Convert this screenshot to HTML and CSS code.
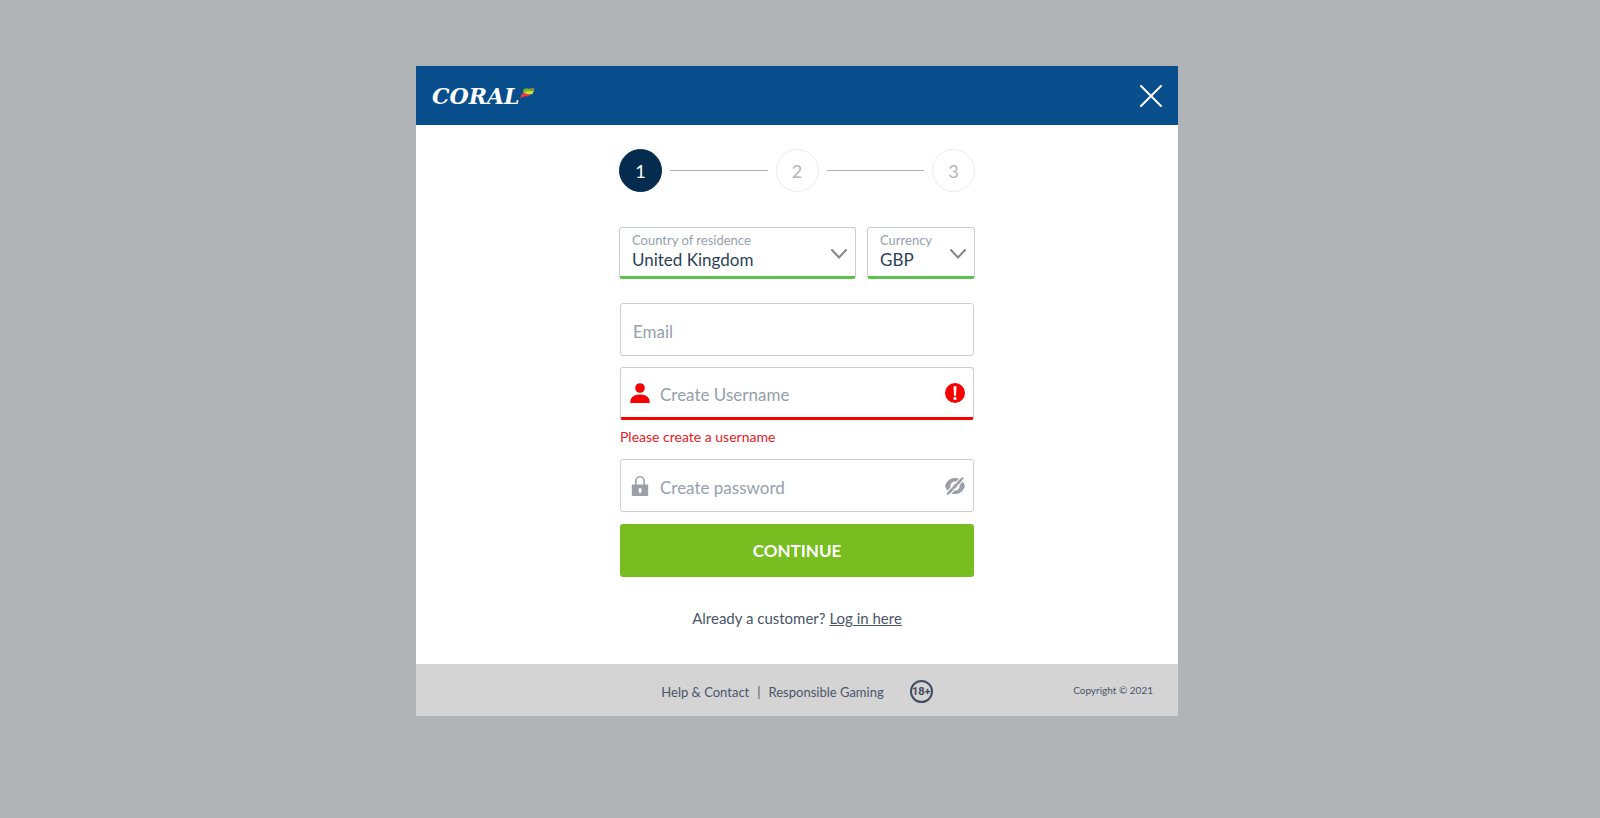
FILE: index.html
```html
<!DOCTYPE html>
<html lang="en">
<head>
<meta charset="utf-8">
<meta name="viewport" content="width=device-width, initial-scale=1">
<title>Coral - Registration</title>
<link rel="stylesheet" href="styles.css">
</head>
<body>
<main class="dialog">
  <header class="dialog-header">
    <a class="logo" href="#" aria-label="Coral">
      <span class="logo-text">CORAL</span>
      <svg class="logo-mark" viewBox="0 0 15 11" aria-hidden="true">
        <path fill="#f0393f" d="M0 10.600 1.500 6.500 3.500 4.800 8 5 9.500 6.500 8.500 8.500 5.500 8.300 3 9Z"/>
        <path fill="#6cb52d" d="M2.500 3.500 4 1 7 .3 11 1 10 3.500 5 4Z"/>
        <path fill="#d9dc2b" d="M3 4.200 8 3 14.500 2.300 13 4.300 13 5.800 10 6.600 6 5.400Z"/>
        <path fill="#8c9a3c" d="M10 .6 14.500 0 13.500 2 10 2.200Z"/>
      </svg>
    </a>
    <button class="close" type="button" aria-label="Close">
      <svg viewBox="0 0 22 22"><path d="M1 1 21 21M21 1 1 21"/></svg>
    </button>
  </header>

  <form class="form">
    <ol class="steps">
      <li class="step step-active">1</li>
      <li class="step">2</li>
      <li class="step">3</li>
    </ol>

    <div class="selects">
      <div class="select-field">
        <label for="country">Country of residence</label>
        <select id="country"><option>United Kingdom</option></select>
        <svg class="chevron" viewBox="0 0 16 10" aria-hidden="true"><path d="M1 1 8 8.500 15 1"/></svg>
      </div>
      <div class="select-field">
        <label for="currency">Currency</label>
        <select id="currency"><option>GBP</option></select>
        <svg class="chevron" viewBox="0 0 16 10" aria-hidden="true"><path d="M1 1 8 8.500 15 1"/></svg>
      </div>
    </div>

    <div class="field">
      <input type="email" placeholder="Email" aria-label="Email">
    </div>

    <div class="field field-invalid">
      <svg class="icon" viewBox="0 0 20 20" aria-hidden="true"><circle cx="10" cy="5" r="4.800"/><path d="M.2 20C.2 14.500 3.500 11.600 10 11.600S19.800 14.500 19.800 20Z"/></svg>
      <input type="text" placeholder="Create Username" aria-label="Create Username" aria-describedby="username-error">
      <svg class="icon" viewBox="0 0 20 20" aria-hidden="true"><circle cx="10" cy="10" r="10"/><path fill="#fff" d="M8.500 3.300h3L11 12.700H9Z"/><circle cx="10" cy="15.400" r="1.600" fill="#fff"/></svg>
    </div>
    <p class="error" id="username-error">Please create a username</p>

    <div class="field">
      <svg class="icon" viewBox="0 0 20 20" aria-hidden="true"><path fill="none" stroke="#9b9fa8" stroke-width="1.600" d="M5.800 9V5.200a4.200 4.400 0 0 1 8.400 0V9"/><path fill-rule="evenodd" d="M2.800 8.500h14.400a1 1 0 0 1 1 1V19a1 1 0 0 1-1 1H2.800a1 1 0 0 1-1-1V9.500a1 1 0 0 1 1-1ZM8.500 13.500 9.200 17h1.800l.7-3.500A1.600 1.600 0 1 0 8.500 13.500Z"/></svg>
      <input type="password" placeholder="Create password" aria-label="Create password">
      <button class="reveal" type="button" aria-label="Show password">
        <svg class="icon" viewBox="0 0 20 20"><path d="M0 10C2 4.300 5.500 2 10 2S18 4.300 20 10c-2 5.700-5.500 8-10 8S2 15.700 0 10Z"/><circle cx="10" cy="10" r="4.600" fill="#fff"/><circle cx="10" cy="10" r="2.600"/><path fill="none" stroke="#fff" stroke-width="1.200" d="M.8 17.200 16.400.8M3.600 19.800 19.200 3.400"/><path fill="none" stroke="#9b9fa8" stroke-width="2.400" d="M2.200 18.500 18 1.800"/></svg>
      </button>
    </div>

    <button class="continue" type="submit">CONTINUE</button>
    <p class="login">Already a customer? <a href="#">Log in here</a></p>
  </form>

  <footer class="dialog-footer">
    <nav class="footer-links">
      <a href="#">Help &amp; Contact</a>
      <span>|</span>
      <a href="#">Responsible Gaming</a>
      <span class="age">18+</span>
    </nav>
    <small class="copyright">Copyright © 2021</small>
  </footer>
</main>
</body>
</html>
```
FILE: styles.css
```css
* {
  box-sizing: border-box;
}

body {
  margin: 0;
  min-height: 100vh;
  padding: 66px 6px 66px 0;
  background: #b0b4b6;
  color: #4a5568;
  font-family: Lato, "Liberation Sans", sans-serif;
}

button,
input,
select {
  font: inherit;
}

button {
  cursor: pointer;
}

.dialog {
  max-width: 762px;
  margin: 0 auto;
  background: #fff;
}

.dialog-header {
  display: flex;
  align-items: center;
  justify-content: space-between;
  height: 59px;
  padding: 0 16px;
  background: #084e8c;
}

.logo {
  display: flex;
  align-items: center;
  color: #fff;
  text-decoration: none;
}

.logo-text {
  font: italic bold 22px/24px "DejaVu Serif", serif;
}

.logo-mark {
  width: 15px;
  height: 11px;
  margin-bottom: 4px;
}

.close {
  display: flex;
  padding: 0;
  border: 0;
  background: none;
}

.close svg {
  width: 22px;
  height: 22px;
  fill: none;
  stroke: #fff;
  stroke-width: 2;
  stroke-linecap: round;
}

.form {
  max-width: 354px;
  margin: 0 auto;
  padding: 24px 0 36px;
}

.steps {
  display: grid;
  grid-template-columns: 43px 1fr 43px 1fr 43px;
  align-items: center;
  gap: 8px;
  margin: 0 -1px 35px;
  padding: 0;
  list-style: none;
}

.step {
  display: flex;
  align-items: center;
  justify-content: center;
  height: 43px;
  border: 1px solid #ececec;
  border-radius: 50%;
  color: #b3b5b6;
  font-size: 18px;
}

.step-active {
  border-color: #052b4f;
  background: #052b4f;
  color: #fff;
}

.steps::before,
.steps::after {
  content: "";
  grid-row: 1;
  grid-column: 2;
  height: 1px;
  background: #a9b0b3;
}

.steps::after {
  grid-column: 4;
}

.selects {
  display: grid;
  grid-template-columns: 237fr 108fr;
  gap: 11px;
  margin: 0 -1px 24px;
}

.select-field {
  position: relative;
}

.select-field label {
  position: absolute;
  top: 5px;
  left: 13px;
  color: #95a0ab;
  font-size: 13px;
  line-height: 16px;
}

.select-field select {
  display: block;
  width: 100%;
  height: 52px;
  padding: 14px 12px 0;
  appearance: none;
  border: 1px solid #c9cecf;
  border-bottom: 3px solid #5cc24d;
  border-radius: 3px;
  background: #fff;
  color: #2b3f58;
  font-size: 17px;
}

.chevron {
  position: absolute;
  top: 22px;
  right: 9px;
  width: 16px;
  height: 10px;
  fill: none;
  stroke: #85858b;
  stroke-width: 2;
  stroke-linecap: round;
  pointer-events: none;
}

.field {
  display: flex;
  align-items: center;
  gap: 10px;
  height: 53px;
  padding: 0 8px 0 9px;
  border: 1px solid #cbcfd1;
  border-radius: 3px;
}

.field input {
  flex: 1;
  min-width: 0;
  height: 24px;
  margin-top: 3px;
  padding: 0;
  border: 0;
  outline: 0;
  background: none;
  color: #2b3f58;
  font-size: 17px;
}

.field input:first-child {
  padding-left: 3px;
}

.field input::placeholder {
  color: #94a0ad;
}

.field-invalid {
  margin-top: 11px;
  border-bottom: 3px solid #f60000;
}

.icon {
  display: block;
  flex: none;
  width: 20px;
  height: 20px;
  fill: #9b9fa8;
}

.field-invalid .icon {
  fill: #f60000;
}

.reveal {
  padding: 0;
  border: 0;
  background: none;
}

.error {
  margin: 8px 0 13px;
  color: #e3211f;
  font-size: 14px;
  line-height: 18px;
}

.continue {
  display: block;
  width: 100%;
  height: 53px;
  margin-top: 12px;
  border: 0;
  border-radius: 3px;
  background: #78be20;
  color: #fff;
  font-size: 17px;
  font-weight: 700;
}

.login {
  margin: 31px 0 0;
  font-size: 15px;
  line-height: 20px;
  text-align: center;
}

.login a {
  color: inherit;
}

.dialog-footer {
  display: grid;
  grid-template-columns: 1fr auto 1fr;
  align-items: center;
  height: 52px;
  padding: 0 25px;
  background: #d4d4d4;
  font-size: 13px;
}

.footer-links {
  display: flex;
  grid-column: 2;
  align-items: center;
  gap: 8px;
  padding-top: 3px;
}

.footer-links a {
  color: inherit;
  text-decoration: none;
}

.age {
  display: flex;
  align-items: center;
  justify-content: center;
  width: 23px;
  height: 23px;
  margin-left: 18px;
  border: 2px solid #404a60;
  border-radius: 50%;
  color: #404a60;
  font-family: Roboto, sans-serif;
  font-size: 11px;
  font-weight: 700;
}

.copyright {
  justify-self: end;
  font-size: 10px;
}
```
